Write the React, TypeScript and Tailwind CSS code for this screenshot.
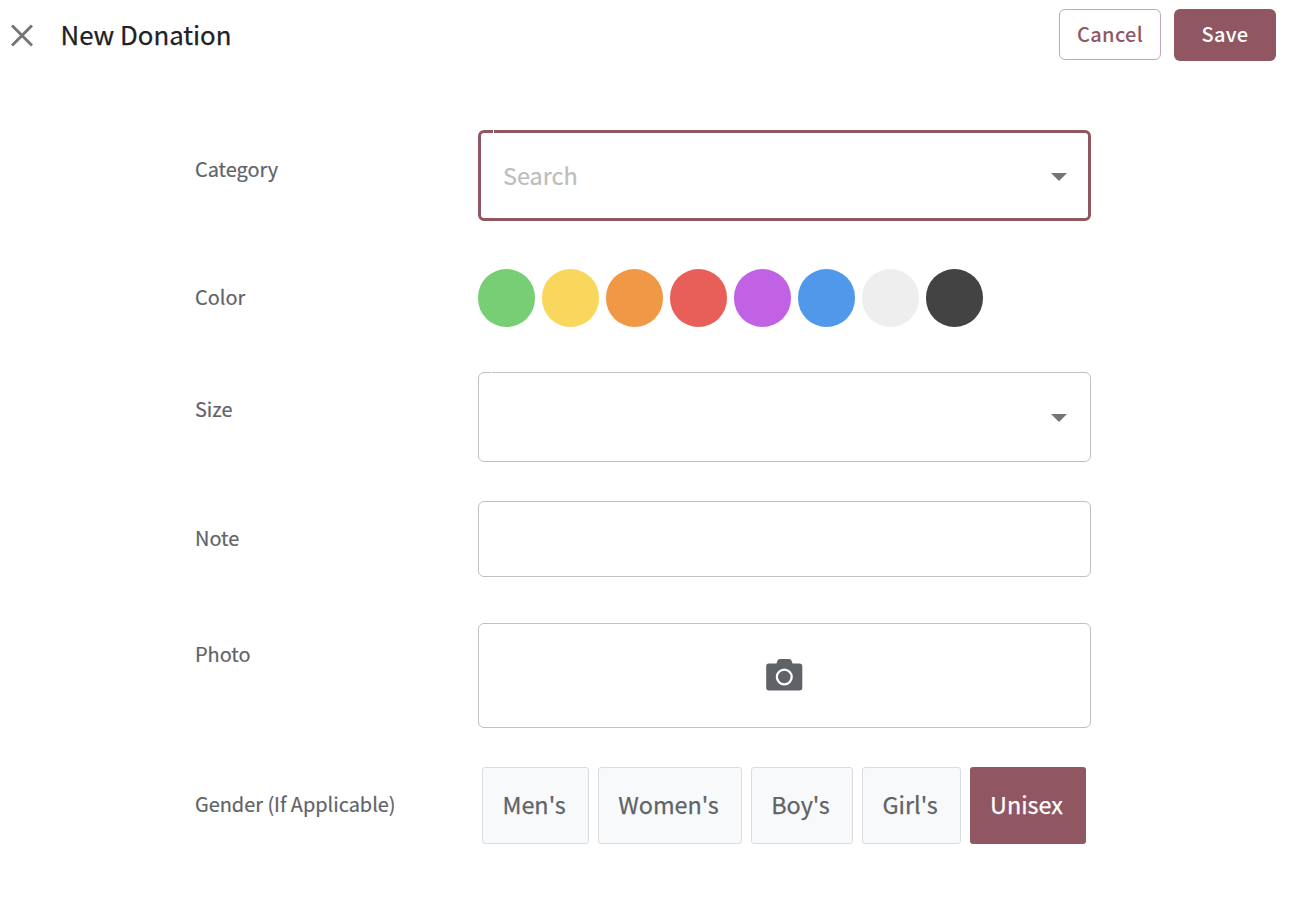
import type { ReactNode } from 'react';

const swatches = ['bg-[#77ce75]', 'bg-[#f9d75d]', 'bg-[#f19846]', 'bg-[#e85f5a]', 'bg-[#c062e3]', 'bg-[#5098e9]', 'bg-[#eeeeee]', 'bg-[#434343]'];

const genders = [
  { label: "Men's", width: 'w-[107px]' },
  { label: "Women's", width: 'w-[144px]' },
  { label: "Boy's", width: 'w-[102px]' },
  { label: "Girl's", width: 'w-[99px]' },
  { label: 'Unisex', width: 'w-[116px]', active: true },
];

function Row({ label, className, labelClass, children }: { label: string; className: string; labelClass: string; children: ReactNode }) {
  return (
    <div className={`flex ${className}`}>
      <div className={`w-[283px] shrink-0 text-[19.9px] leading-[30px] text-[#5f6368] [-webkit-text-stroke:0.2px] ${labelClass}`}>{label}</div>
      {children}
    </div>
  );
}

function Caret() {
  return (
    <svg className="mt-[2px]" width="16" height="8" viewBox="0 0 16 8" fill="#757575">
      <path d="M0 0h16L8 8z" />
    </svg>
  );
}

export default function App() {
  return (
    <div className="h-[900px] w-[1290px] overflow-hidden bg-white font-['Noto_Sans_CJK_SC',sans-serif]">
      <header className="flex h-[70px] items-start pr-[14px] pl-[11px]">
        <svg className="mt-[24px]" width="22" height="23" viewBox="0 0 22 23" stroke="#757575" strokeWidth="3">
          <path d="M1 1.500l20 20M21 1.500l-20 20" />
        </svg>
        <h1 className="mt-[16px] ml-[27.5px] flex-1 text-[25.800px] leading-[36px] text-[#202124] [-webkit-text-stroke:0.25px]">New Donation</h1>
        <button className="mt-[9px] h-[51px] w-[102px] rounded-[6px] border border-[#c7a6b0] pb-[2px] text-[20px] font-medium tracking-[0.3px] text-[#905762]">Cancel</button>
        <button className="mt-[9px] ml-[13px] h-[52px] w-[102px] rounded-[6px] bg-[#905762] pb-[3px] text-[20px] font-medium tracking-[0.3px] text-white">Save</button>
      </header>
      <main className="ml-[195px] w-[896px]">
        <Row label="Category" className="pt-[60px]" labelClass="pt-[24px]">
          <div className="relative flex h-[91px] flex-1 items-center justify-between rounded-[6px] border-[3px] border-[#905762] pr-[21px] pl-[22px]">
            <i className="absolute -top-[3px] left-[12px] h-[3px] w-px bg-white" />
            <span className="pb-[2px] text-[23.4px] leading-[36px] text-[#bdbdbd] [-webkit-text-stroke:0.2px]">Search</span>
            <Caret />
          </div>
        </Row>
        <Row label="Color" className="pt-[48px]" labelClass="pt-[13px]">
          <div className="flex gap-[7px]">
            {swatches.map((color) => (
              <button key={color} aria-label="Color" className={`h-[58px] w-[57px] rounded-full ${color}`} />
            ))}
          </div>
        </Row>
        <Row label="Size" className="pt-[45px]" labelClass="pt-[22px]">
          <div className="relative flex h-[90px] flex-1 items-center justify-end rounded-[6px] border border-[#c0c0c0] pr-[23px]">
            <i className="absolute -top-px left-[12px] h-px w-px bg-white" />
            <Caret />
          </div>
        </Row>
        <Row label="Note" className="pt-[39px]" labelClass="pt-[22px]">
          <div className="h-[76px] flex-1 rounded-[6px] border border-[#c0c0c0]" />
        </Row>
        <Row label="Photo" className="pt-[46px]" labelClass="pt-[16px]">
          <div className="flex h-[105px] flex-1 items-center justify-center rounded-[6px] border border-[#c0c0c0] pb-px">
            <svg width="37" height="32" viewBox="0 0 37 32">
              <path fill="#5f6368" d="M3 4.500H10.500L11.200 2.200A3 3 0 0 1 14 0h9a3 3 0 0 1 2.800 2.200L26.500 4.500H33.600a2.700 2.700 0 0 1 2.700 2.700v21.600a2.700 2.700 0 0 1-2.700 2.700H2.900A2.700 2.700 0 0 1 .2 28.800V7.200A2.700 2.700 0 0 1 3 4.500z" />
              <circle cx="18.300" cy="18" r="7.400" fill="none" stroke="#fff" strokeWidth="2.300" />
            </svg>
          </div>
        </Row>
        <Row label="Gender (If Applicable)" className="pt-[39px]" labelClass="pt-[22px]">
          <div className="flex gap-[9px] pl-[4px]">
            {genders.map((g) => (
              <button key={g.label} className={`h-[77px] rounded-[3px] pr-[3px] pb-[2px] text-[23.4px] [-webkit-text-stroke:0.25px] ${g.width} ${g.active ? 'bg-[#905762] text-white' : 'border border-[#dadce0] bg-[#f8f9fa] text-[#5f6368]'}`}>
                {g.label}
              </button>
            ))}
          </div>
        </Row>
      </main>
    </div>
  );
}
